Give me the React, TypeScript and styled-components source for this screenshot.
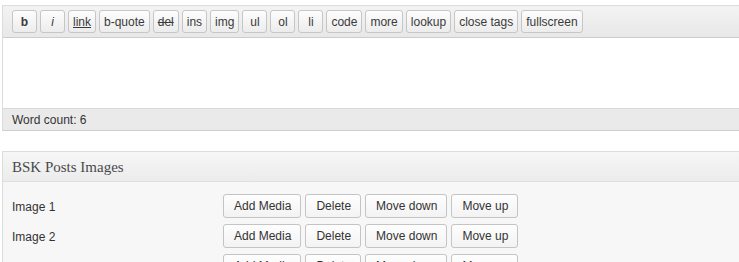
import styled, { createGlobalStyle } from "styled-components";

// 툴바 버튼 목록
const tags = [
  "b", "i", "link", "b-quote", "del", "ins", "img", "ul", "ol", "li",
  "code", "more", "lookup", "close tags", "fullscreen",
];

const images = ["Image 1", "Image 2", "Image 3"];

const GlobalStyle = createGlobalStyle`
  body {
    margin: 0;
    overflow: hidden;
    background: #fff;
    font-family: "Liberation Sans", Arial, sans-serif;
  }
`;

export default function App() {
  return (
    <Page>
      <GlobalStyle />
      <Editor>
        <Toolbar>
          {tags.map((t) => (
            <TagButton key={t} $kind={t}>
              {t}
            </TagButton>
          ))}
        </Toolbar>
        <TextArea />
        <StatusBar>Word count: 6</StatusBar>
      </Editor>

      <Panel>
        <PanelHeader>BSK Posts Images</PanelHeader>
        <PanelBody>
          {images.map((label) => (
            <Row key={label}>
              <Label>{label}</Label>
              <Actions>
                <ActionButton>Add Media</ActionButton>
                <ActionButton>Delete</ActionButton>
                <ActionButton>Move down</ActionButton>
                <ActionButton>Move up</ActionButton>
              </Actions>
            </Row>
          ))}
        </PanelBody>
      </Panel>
    </Page>
  );
}

// 스타일 정의
const Page = styled.div`
  padding: 5px 0 0 2px;
  width: 760px;
`;

const Editor = styled.div`
  border: 1px solid #dcdcdc;
  border-bottom-color: #cfcfcf;
`;

const Toolbar = styled.div`
  display: flex;
  align-items: center;
  gap: 3px;
  height: 32px;
  padding: 0 0 0 9px;
  background: linear-gradient(#f3f3f3, #e8e8e8);
  border-bottom: 1px solid #cccccc;
  box-sizing: border-box;
`;

const TagButton = styled.span<{ $kind: string }>`
  display: inline-flex;
  align-items: center;
  justify-content: center;
  box-sizing: border-box;
  height: 23px;
  min-width: 25px;
  padding: 0 4px;
  border: 1px solid #c6c6c6;
  border-radius: 3px;
  background: linear-gradient(#fdfdfd, #ececec);
  color: #3a3a3a;
  font-size: 12px;
  font-weight: ${(p) => (p.$kind === "b" ? "bold" : "normal")};
  font-style: ${(p) => (p.$kind === "i" ? "italic" : "normal")};
  text-decoration: ${(p) =>
    p.$kind === "link" ? "underline" : p.$kind === "del" ? "line-through" : "none"};
`;

const TextArea = styled.div`
  height: 70px;
  background: #fff;
`;

const StatusBar = styled.div`
  height: 21px;
  line-height: 22px;
  padding-left: 9px;
  background: #eaeaea;
  border-top: 1px solid #dadada;
  font-size: 12px;
  color: #333;
`;

const Panel = styled.div`
  margin-top: 20px;
  border: 1px solid #dcdcdc;
  border-bottom: none;
`;

const PanelHeader = styled.div`
  height: 29px;
  line-height: 30px;
  padding-left: 9px;
  background: linear-gradient(#f6f6f6, #ececec);
  border-bottom: 1px solid #dfdfdf;
  font-family: "Liberation Serif", "DejaVu Serif", serif;
  font-size: 15px;
  color: #4a4a4a;
`;

const PanelBody = styled.div`
  background: #f7f7f7;
  padding: 12px 0 10px 9px;
  display: flex;
  flex-direction: column;
  gap: 6px;
`;

const Row = styled.div`
  display: grid;
  grid-template-columns: 211px auto;
  align-items: center;
`;

const Label = styled.div`
  font-size: 12px;
  color: #333;
  padding-top: 1px;
`;

const Actions = styled.div`
  display: flex;
  gap: 4px;
`;

const ActionButton = styled.span`
  display: inline-flex;
  align-items: center;
  box-sizing: border-box;
  height: 24px;
  padding: 0 9px 0 10px;
  border: 1px solid #c4c4c4;
  border-radius: 3px;
  background: linear-gradient(#fefefe, #f3f3f3);
  font-size: 12px;
  color: #333;
`;
